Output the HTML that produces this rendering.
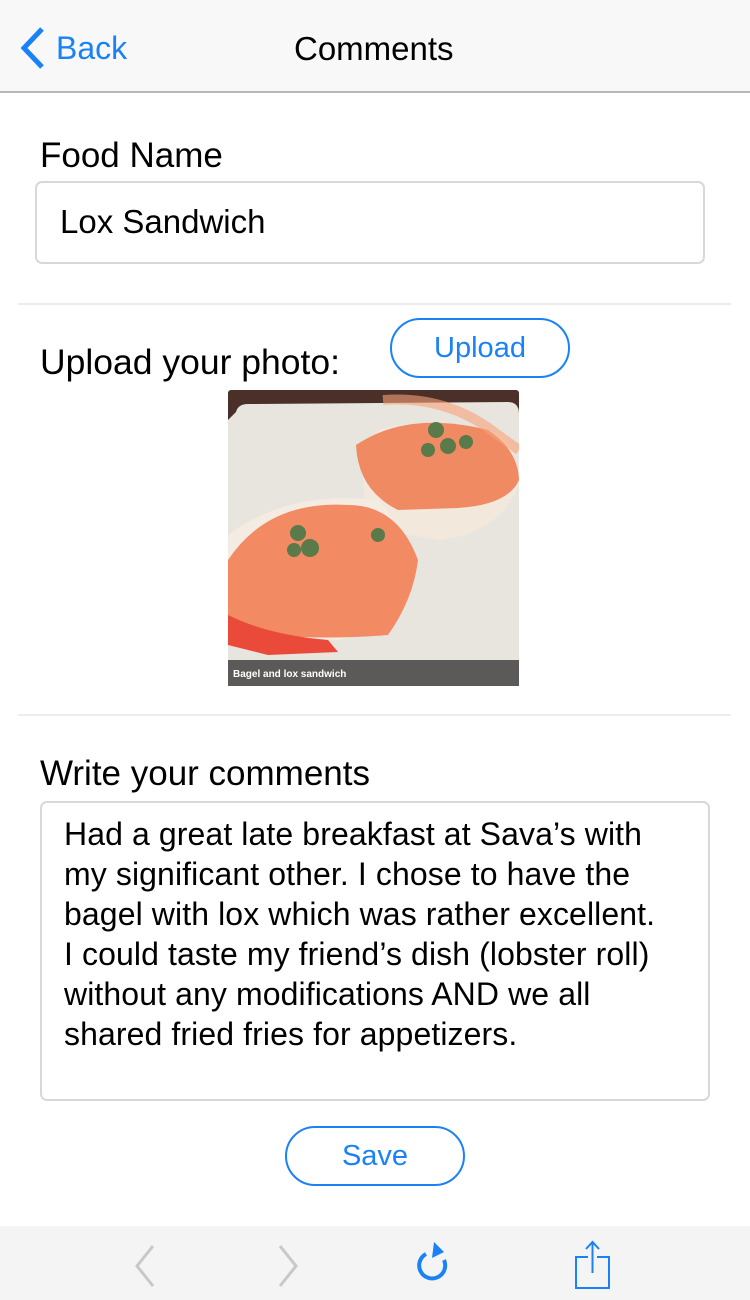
<!DOCTYPE html>
<html><head><meta charset="utf-8"><style>
*{margin:0;padding:0;box-sizing:border-box}
body{width:750px;height:1300px;background:#fff;font-family:"Liberation Sans",sans-serif;position:relative;overflow:hidden;color:#000}
.a{position:absolute;white-space:nowrap}
.nav{left:0;top:0;width:750px;height:93px;background:#f8f8f8;border-bottom:2px solid #b8b8b8}
.hr{height:2px;background:#ececec;left:18px;width:713px}
.lbl{font-size:35px;letter-spacing:0px}
.btn{border:2px solid #1a82f7;border-radius:30px;color:#1a82f7;font-size:29px;text-align:center}
.box{border:2px solid #d8d8d8;border-radius:7px}
.ta{font-size:32px;line-height:40px;letter-spacing:0.1px}
</style></head><body>
<div class="a nav"></div>
<svg class="a" style="left:16px;top:26px" width="32" height="44"><path d="M26 3 L8 22 L26 41" stroke="#1a82f7" stroke-width="5" fill="none"/></svg>
<div class="a" style="left:56px;top:30px;font-size:32px;color:#1a82f7">Back</div>
<div class="a" style="left:294px;top:30px;font-size:33px">Comments</div>

<div class="a lbl" style="left:40px;top:136px">Food Name</div>
<div class="a box" style="left:35px;top:181px;width:670px;height:83px"></div>
<div class="a" style="left:60px;top:203px;font-size:33px">Lox Sandwich</div>
<div class="a hr" style="top:303px"></div>

<div class="a lbl" style="left:40px;top:342px;font-size:35.5px">Upload your photo:</div>
<div class="a btn" style="left:390px;top:318px;width:180px;height:60px;line-height:56px">Upload</div>

<svg class="a" style="left:228px;top:390px" width="291" height="296" viewBox="0 0 291 296">
<rect width="291" height="296" rx="3" fill="#4a3028"/>
<path d="M8 22 Q10 14 20 14 L280 12 Q291 12 291 24 L291 270 L0 270 L0 30 Z" fill="#e8e4de"/>
<path d="M150 40 Q200 25 280 45 L291 95 Q270 145 210 150 L150 140 Q120 90 150 40Z" fill="#f2e8dc"/>
<path d="M128 55 Q180 20 260 40 Q290 60 291 90 Q280 115 230 118 L170 120 Q130 100 128 55Z" fill="#f08a62"/>
<path d="M0 145 Q60 100 150 110 Q180 140 175 190 Q160 240 110 250 L30 245 L0 230Z" fill="#f4ece2"/>
<path d="M0 170 Q40 110 120 115 Q170 115 190 170 Q185 210 160 245 Q100 250 40 245 L0 235Z" fill="#f28a64"/>
<path d="M0 225 Q40 245 100 250 L110 262 L40 265 L0 255Z" fill="#e94a3a"/>
<path d="M155 10 Q220 5 270 45 L291 60" stroke="#f6a17a" stroke-width="10" fill="none" opacity=".6"/>
<circle cx="208" cy="40" r="8" fill="#5a7a4a"/><circle cx="220" cy="56" r="8" fill="#5a7a4a"/><circle cx="238" cy="52" r="7" fill="#5a7a4a"/><circle cx="200" cy="60" r="7" fill="#5a7a4a"/>
<circle cx="70" cy="143" r="8" fill="#5a7a4a"/><circle cx="82" cy="158" r="9" fill="#5a7a4a"/><circle cx="66" cy="160" r="7" fill="#5a7a4a"/><circle cx="150" cy="145" r="7" fill="#5a7a4a"/>
<rect x="0" y="270" width="291" height="26" fill="#5c5a58"/>
<text x="5" y="287" font-family="Liberation Sans,sans-serif" font-size="10" font-weight="bold" fill="#fff">Bagel and lox sandwich</text>
</svg>
<div class="a hr" style="top:714px"></div>

<div class="a lbl" style="left:40px;top:754px">Write your comments</div>
<div class="a box" style="left:40px;top:801px;width:670px;height:300px"></div>
<div class="a ta" style="left:64px;top:814px">Had a great late breakfast at Sava’s with<br>my significant other. I chose to have the<br>bagel with lox which was rather excellent.<br>I could taste my friend’s dish (lobster roll)<br>without any modifications AND we all<br>shared fried fries for appetizers.</div>

<div class="a btn" style="left:285px;top:1126px;width:180px;height:60px;line-height:56px">Save</div>

<div class="a" style="left:0;top:1226px;width:750px;height:74px;background:#f4f4f4"></div>
<svg class="a" style="left:0;top:1226px" width="750" height="74">
<path d="M153 20 L137 40 L153 60" stroke="#c8c8c8" stroke-width="3" fill="none"/>
<path d="M280 20 L296 40 L280 60" stroke="#c8c8c8" stroke-width="3" fill="none"/>
<path d="M426 28 A13 13 0 1 0 444 34" stroke="#1a82f7" stroke-width="4" fill="none"/>
<path d="M434 16 L444 26 L432 32Z" fill="#1a82f7"/>
<path d="M588 31 L576 31 L576 62 L609 62 L609 31 L597 31" stroke="#1a82f7" stroke-width="2" fill="none"/>
<path d="M592.5 47 L592.5 16 M586 23 L592.5 16 L599 23" stroke="#1a82f7" stroke-width="2" fill="none"/>
</svg>
</body></html>
